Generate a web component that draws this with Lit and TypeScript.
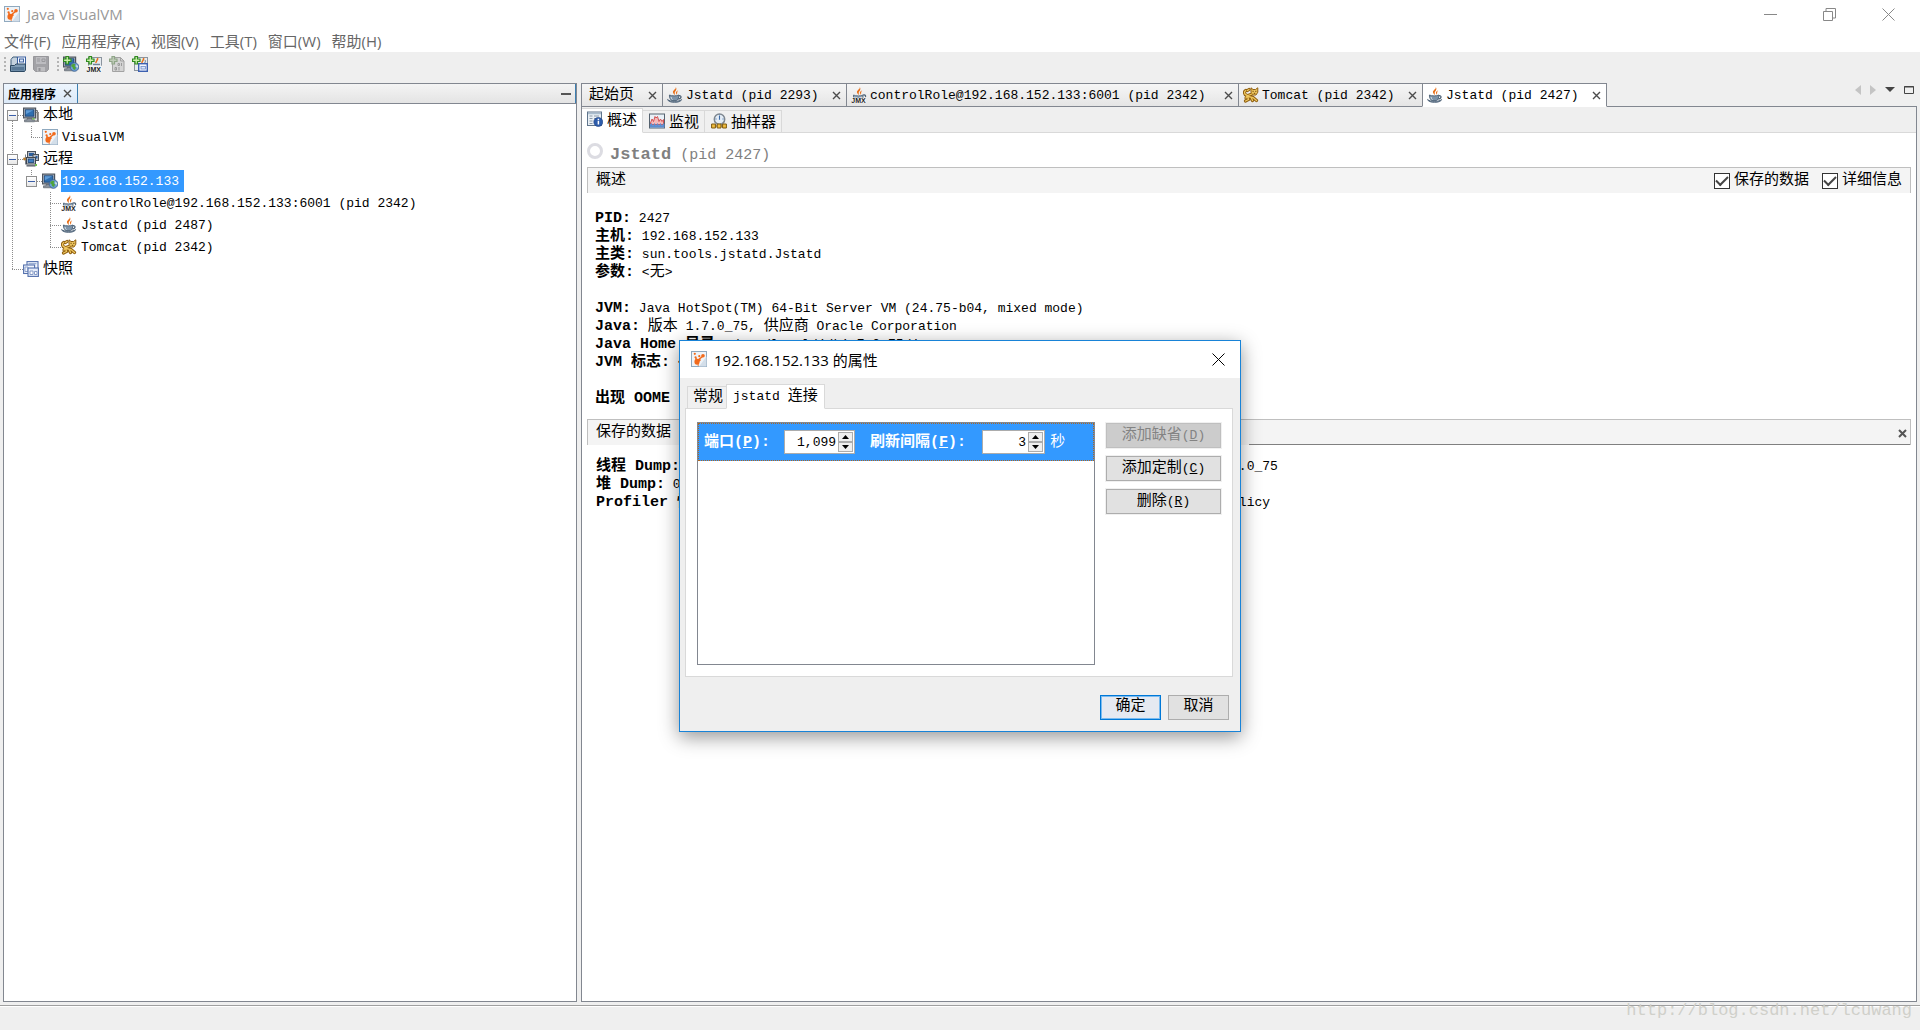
import { LitElement, html, css, svg, nothing } from "lit";
import { customElement, property, state } from "lit/decorators.js";
import { classMap } from "lit/directives/class-map.js";
import { styleMap } from "lit/directives/style-map.js";

/* ---------- icon artwork, all on a 16x16 grid ---------- */

const plus = (c = "#2f8a1f", f = "#c9f0a8") => svg`
  <path d="M3 .5h2.500v2.500h2.500v2.500h-2.500v2.500h-2.500v-2.500h-2.500v-2.500h2.500z" fill=${f} stroke=${c} stroke-width="1.200"/>`;

const globe = svg`
  <circle cx="11.500" cy="11" r="4.300" fill="#6d9fd6" stroke="#3c5f8c" stroke-width=".8"/>
  <path d="M8.500 9c1.500-1.700 3.500-1.500 4-.5l-1 1.500 1.500 1.500-1 2.500-2-1-.5-2-1.500-.8z" fill="#4fa43a"/>
  <path d="M13.500 8.500l1.500 2-.8 1.500-1-1.500z" fill="#e2f3da"/>`;

const monitor = svg`
  <rect x=".6" y="1.100" width="12" height="9.800" fill="#b9c0ca" stroke="#4d545e" stroke-width="1.200"/>
  <rect x="2.300" y="2.800" width="8.600" height="6.400" fill="#2f6fb0" stroke="#173f70" stroke-width=".8"/>
  <path d="M2.800 3.200h7.500l-7.500 4z" fill="#5f9bd6"/>
  <path d="M4 11.500h5v1.300h2.500v2h-10v-2h2.500z" fill="#8b929c" stroke="#4d545e" stroke-width=".6"/>`;

const flame = svg`
  <path d="M8.700 0c.9 2-3.200 3.200-2.700 5.400.2 1 1.200 1.600 1.800 2.600.3-1.400-.5-2 .1-3 .8-1.200 2.400-2.800.8-5z" fill="#e8701a"/>
  <path d="M11.200 3.200c-1.700.8-2.900 2-2 3.400l.4 1.200c1.200-1.600-.2-2.500 1.600-4.600z" fill="#e8701a"/>`;

const cup = svg`
  <path d="M.6 12.500c2 2.400 12 2.400 14 0-.6 3.800-13.400 3.800-14 0z" fill="#aebccb" stroke="#4a5f74" stroke-width=".9"/>
  <path d="M11.500 8.800c3.600-.8 3.400 3.200-.8 3.200" fill="none" stroke="#4a5f74" stroke-width="1.200"/>
  <path d="M2.400 8c2.500 1.200 7 1.200 9.500 0 0 2.700-1 4.900-2.600 5.600h-4.300c-1.600-.7-2.600-2.900-2.600-5.600z" fill="#7e94a9" stroke="#4a5f74" stroke-width=".9"/>
  <path d="M4 10c.2 1.400.7 2.200 1.400 2.700" stroke="#dfe7ee" fill="none"/>${flame}`;

const catLines = "M2.800 3.500c-2 1-1.500 4 .5 4.500s-.3 2-.3 3M5 8.500l4-1.500M5 9.500l5 1 3.500 3M4.500 9.500l1 3-3 1.500M8 10l1.500 3.500M4.500 3.500l1.500-1";

const art: Record<string, unknown> = {
  vm: svg`
    <rect x=".5" y=".5" width="15" height="15" fill="#eff3f7" stroke="#8fa9bf"/>
    <path d="M8 15.500h7.500v-10z" fill="#d3dee9"/>
    <ellipse cx="6" cy="10.800" rx="2.600" ry="3" fill="#f26a1b"/>
    <path d="M6.500 9.500l5-4M5.500 9l-1-3" stroke="#f26a1b" stroke-width="1.500" fill="none"/>
    <path d="M7 8l2.200-.2.600 1.800-2 1.400z" fill="#f26a1b"/>
    <circle cx="12" cy="4.800" r="1.800" fill="#f26a1b"/>
    <circle cx="8.300" cy="5.200" r="1.100" fill="#f26a1b"/>
    <circle cx="3.800" cy="2.800" r="1.100" fill="#f26a1b"/>
    <circle cx="4.500" cy="6.300" r="1" fill="#f26a1b"/>
    <circle cx="7.200" cy="14" r=".8" fill="#f26a1b"/>`,
  open: svg`
    <path d="M1 3.500l2-2.500h4l1 2v9.500h-7z" fill="#c3d1de" stroke="#3f5f7d"/>
    <rect x="7.500" y="1" width="8" height="8" fill="#f5f9ff" stroke="#3c60a0"/>
    <rect x="9.500" y="3" width="4" height="3" fill="#dbe6f7" stroke="#3c60a0"/>
    <path d="M.5 15.500v-6h4l1.500-1.500h9.500v6l-1 1.500z" fill="#7e9bb5" stroke="#2c4862"/>
    <path d="M1.500 11h12.500v3.500h-12.500z" fill="#587896"/>`,
  save: svg`
    <path d="M.5.5h15v13l-2 2h-11l-2-2z" fill="#a2a2a6" stroke="#97979b"/>
    <rect x="3" y="1" width="10" height="7" fill="#bcbcc0"/>
    <path d="M4 3h3M4 5h3M9 3h3v2.500h-3z" stroke="#98989c" fill="none"/>
    <rect x="4" y="11" width="8" height="4.500" fill="#bdbdc0"/><rect x="5.500" y="12" width="2" height="3" fill="#929296"/>`,
  addHost: svg`${monitor}${globe}${plus()}`,
  addJmx: svg`
    <rect x="2.500" y="1.500" width="13" height="14" fill="#e6ebf0" stroke="#8b949e"/>
    <path d="M11.500 2c1 2-2 3-1.500 5" fill="none" stroke="#e8701a" stroke-width="1.600"/>
    <path d="M7 8.500h7" stroke="#6c8196" stroke-width="1.500"/>
    <rect x=".5" y="9.700" width="15.500" height="6.300" fill="#f4f4f4"/>
    <text x=".6" y="15.500" class="tag">JMX</text>${plus()}`,
  addDump: svg`
    <path d="M3.500 1.500h8l3.500 3.500v10.500h-11.500z" fill="#d4d4d4" stroke="#a2a2a2"/>
    <path d="M11.500 1.500v3.500h3.500" fill="none" stroke="#a2a2a2"/>
    <path d="M9 7.500h1.500v2h-1.500zM12.500 7v3M6 11.500h1.500v2.500h-1.500zM10 11v3.500" fill="none" stroke="#9b9b9b"/>
    ${plus("#8fa588", "#c0ccb9")}`,
  addSnap: svg`
    <rect x="2.500" y="1.500" width="13" height="13" fill="#e6ebf0" stroke="#8b949e"/>
    <path d="M11.500 2c1 2-2 3-1.500 5" fill="none" stroke="#e8701a" stroke-width="1.600"/>
    <path d="M13 4c1 1.500 0 3-1 3.500" fill="none" stroke="#6c8196"/>
    <rect x="6.700" y="7.700" width="8.600" height="7.600" fill="#f3f7ff" stroke="#3c60b0" stroke-width="1.400"/>
    <rect x="9" y="10.500" width="4.500" height="2.500" fill="#dce7fb" stroke="#6f8cc7" stroke-width=".8"/>${plus()}`,
  local: svg`
    <path d="M12 3.500h2.500v10.500h-2.500" fill="#e3e3e3" stroke="#6a6a6a" stroke-width=".9"/>
    <path d="M12 5.500h4M12 14.500h4M15.500 5v10" stroke="#8b8b8b" stroke-width=".9" fill="none"/>${monitor}
    <rect x="9.500" y="11" width="2" height="1.500" fill="#6cc04a"/>`,
  remote: svg`
    <rect x="4.500" y=".5" width="8" height="6" fill="#b8bec8" stroke="#4b525c"/>
    <rect x="6" y="2" width="5" height="3" fill="#2b5f9e"/>
    <rect x="10" y="3.500" width="5.500" height="6" fill="#b8bec8" stroke="#4b525c"/>
    <rect x="12.500" y="5" width="2" height="2.500" fill="#2b5f9e"/>
    <rect x="3.500" y="6.500" width="9" height="6.500" fill="#c5cbd3" stroke="#3f464f"/>
    <rect x="5.200" y="8" width="5.600" height="3.500" fill="#3c7ec2" stroke="#173f70" stroke-width=".8"/>
    <path d="M3.500 14.700h9" stroke="#6a717b" stroke-width="1.800"/>
    <path d="M12 13h2v2h-2z" fill="#6cc04a"/>
    <path d="M2.500 3.500v10M1 8h2" stroke="#7c838c"/>
    <circle cx="1.500" cy="8" r="1.400" fill="#b87b2c"/>`,
  host: svg`${monitor}${globe}`,
  jmx: svg`
    <path d="M2.500 8c2.500 1.200 7 1.200 9.500 0v3h-9.500z" fill="#8ea2b5" stroke="#4a5f74" stroke-width=".8"/>
    <path d="M12 8c3-.6 3.200 1.600 2 2.400" fill="none" stroke="#4a5f74" stroke-width="1.100"/>${flame}
    <text x=".3" y="15.700" class="tag halo">JMX</text>`,
  cup,
  tomcat: svg`
    <path d=${catLines} fill="none" stroke="#8f5f10" stroke-width="3.200" stroke-linecap="round"/>
    <path d="M8 .8l2 1.700h2.500l2.300-1.700v4.400l-1.800 2.800h-3.200l-1.800-2.800z" fill="#f0c860" stroke="#8f5f10"/>
    <path d=${catLines} fill="none" stroke="#f0c860" stroke-width="1.300" stroke-linecap="round"/>
    <path d="M9.500 4.300h1.200M12.200 4.300h1.200M10.700 6.300h1.600" stroke="#6a430a"/>`,
  snapshots: svg`
    <rect x="4" y=".6" width="11" height="9" fill="#f2f6fd" stroke="#5470ad" stroke-width="1.100"/>
    <path d="M5.500 2.700h8" stroke="#8ba0cb"/>
    <rect x=".6" y="4" width="11" height="8.500" fill="#f2f6fd" stroke="#5470ad" stroke-width="1.100"/>
    <path d="M2 6h3v4.500h-3z" fill="none" stroke="#8ba0cb"/>
    <rect x="5" y="7" width="10.400" height="8.400" fill="#e6edfa" stroke="#5470ad" stroke-width="1.100"/>
    <path d="M7 10h3v3.500h-3zM11.500 10.500h2.500v3h-2.500z" fill="#fff" stroke="#7d93c2" stroke-width=".9"/>`,
  overview: svg`
    <rect x=".5" y="1" width="14" height="13.500" fill="#e9eff5" stroke="#60758c"/>
    <path d="M1 2.500h13" stroke="#a9bccd" stroke-width="1.500"/>
    <path d="M2.500 5h3M7 5h5M2.500 7.500h3M7 7.500h3M2.500 10h3M2.500 12.500h3" stroke="#8c9aa8"/>
    <circle cx="11.300" cy="11" r="4.500" fill="#2d5cab" stroke="#1c3f80" stroke-width=".6"/>
    <path d="M11.400 10v3.500M11.400 7.800v1.400" stroke="#fff" stroke-width="1.500"/>`,
  monitorTab: svg`
    <rect x=".5" y="1" width="15" height="14" fill="#e9f0f7" stroke="#55626f"/>
    <path d="M1.500 10l1.500-4 1.500 2.500 1.500-5 1 1.500 1.500-1.500 1.500 5 1.500-2.500 1.500 2.500 1.500-2v5h-13z" fill="#f4b9b9" stroke="#d04545" stroke-width=".9"/>
    <path d="M1 14.500v-3l1.500-1.500 1.500 2.500 1.500-2.500 1.500 2.500 1.500-2.500 1.500 2.500 1.500-2.500 1.500 2.500 1.500-2.500 1 1.500v3z" fill="#5b8ed1"/>`,
  sampler: svg`
    <circle cx="8.500" cy="6.200" r="5.200" fill="#e4edf6" stroke="#7e8790" stroke-width="1.500"/>
    <path d="M8.500 3v3.700M8.500 1.800v.8M4.500 6h1M11.500 6h1" stroke="#3d6ca8" stroke-width="1.100"/>
    <path d="M3 13h11" stroke="#70500f"/>
    <path d="M.6 11h3.800v4h-3.800zM6.200 11h3.800v4h-3.800zM11.600 11h3.800v4h-3.800z" fill="#f0bd3f" stroke="#7f5a10"/>`,
};

@customElement("vm-icon")
class VmIcon extends LitElement {
  @property() name = "";
  static styles = css`
    :host { display: block; flex: none; width: 16px; height: 16px; }
    .art { display: block; width: 16px; height: 16px; }
    .tag { font: bold 7px "Liberation Sans", sans-serif; fill: #222; }
    .halo { stroke: #fff; stroke-width: 1px; paint-order: stroke; }
  `;
  render() {
    return html`<svg class="art" viewBox="0 0 16 16" aria-hidden="true">${art[this.name]}</svg>`;
  }
}

/* Chinese runs are set one step larger than the monospaced Latin around them. */
const mixed = (text: string) =>
  text
    .split(/([\u3000-\u9fff\uff00-\uffef]+)/)
    .filter(Boolean)
    .map((run) => (/[\u3000-\u9fff\uff00-\uffef]/.test(run) ? html`<span class="han">${run}</span>` : run));

const base = css`
  * { box-sizing: border-box; }
  button, input { font: inherit; color: inherit; margin: 0; padding: 0; border: 0; background: none; border-radius: 0; }
  .han { font-family: "Noto Sans CJK SC", sans-serif; font-size: 15px; line-height: 0; }
  .cross { display: block; width: 9px; height: 9px; }
`;

const cross = (w = 1.4, c = "#4c4c4c") =>
  html`<svg class="cross" viewBox="0 0 9 9" aria-hidden="true"><path d="M1 1l7 7M8 1l-7 7" stroke=${c} stroke-width=${w} fill="none"/></svg>`;

type Guide = "gap" | "pipe" | "tee" | "ell" | "top";
interface Node { guides: Guide[]; expander?: boolean; icon: string; label: string; }

const nodes: Node[] = [
  { guides: ["top"], expander: true, icon: "local", label: "本地" },
  { guides: ["pipe", "ell"], icon: "vm", label: "VisualVM" },
  { guides: ["tee"], expander: true, icon: "remote", label: "远程" },
  { guides: ["pipe", "ell"], expander: true, icon: "host", label: "192.168.152.133" },
  { guides: ["pipe", "gap", "tee"], icon: "jmx", label: "controlRole@192.168.152.133:6001 (pid 2342)" },
  { guides: ["pipe", "gap", "tee"], icon: "cup", label: "Jstatd (pid 2487)" },
  { guides: ["pipe", "gap", "ell"], icon: "tomcat", label: "Tomcat (pid 2342)" },
  { guides: ["ell"], icon: "snapshots", label: "快照" },
];

@customElement("vm-explorer")
class VmExplorer extends LitElement {
  @state() private selected = 3;

  static styles = [base, css`
    :host { display: flex; flex-direction: column; border: 1px solid #828790; background: #fff; min-width: 0; }
    .head { display: flex; align-items: stretch; height: 20px; border-bottom: 1px solid #828790; background: linear-gradient(#f4f4f4, #e4e4e4); }
    .tab { display: flex; align-items: center; gap: 7px; padding: 0 5px 0 4px; border-right: 1px solid #3c7fb1; background: linear-gradient(#edf5fd, #dbe9f8); font: bold 12px "Noto Sans CJK SC", sans-serif; }
    .close { display: flex; }
    .min { margin-left: auto; width: 20px; display: flex; align-items: center; justify-content: center; border-right: 1px solid #3c7fb1; }
    .min::before { content: ""; width: 10px; height: 2px; background: #555; }
    .tree { list-style: none; margin: 0; padding: 0; font: 13px "Liberation Mono", "Noto Sans CJK SC", monospace; }
    .row { display: flex; height: 22px; align-items: center; }
    .guide { flex: none; width: 19px; height: 22px; background-repeat: no-repeat;
      --v: repeating-linear-gradient(#8c8c8c 0 1px, transparent 1px 2px);
      --h: repeating-linear-gradient(90deg, #8c8c8c 0 1px, transparent 1px 2px); }
    .pipe { background-image: var(--v); background-size: 1px 22px; background-position: 8px 0; }
    .tee { background-image: var(--v), var(--h); background-size: 1px 22px, 11px 1px; background-position: 8px 0, 8px 11px; }
    .ell { background-image: var(--v), var(--h); background-size: 1px 11px, 11px 1px; background-position: 8px 0, 8px 11px; }
    .top { background-image: var(--v), var(--h); background-size: 1px 11px, 11px 1px; background-position: 8px 11px, 8px 11px; }
    .box { display: flex; align-items: center; justify-content: center; width: 11px; height: 11px; margin: 6px 0 0 3px; border: 1px solid #8f8f8f; background: linear-gradient(#fff, #e8e8e8); }
    .box::before { content: ""; width: 7px; height: 1px; background: #3c5fa8; }
    .label { height: 22px; line-height: 24px; margin-left: 3px; padding: 0 5px 0 1px; white-space: pre; }
    .on { background: #3399ff; color: #fff; }
  `];

  render() {
    return html`
      <div class="head">
        <div class="tab"><span>应用程序</span><button class="close" aria-label="关闭">${cross()}</button></div>
        <button class="min" aria-label="最小化"></button>
      </div>
      <ul class="tree" role="tree">
        ${nodes.map((n, i) => html`
          <li class="row" role="treeitem" aria-selected=${i === this.selected}>
            ${n.guides.map((g, k) => html`<span class="guide ${g}">${n.expander && k === n.guides.length - 1
              ? html`<button class="box" aria-label="折叠"></button>` : nothing}</span>`)}
            <vm-icon name=${n.icon}></vm-icon>
            <span class=${classMap({ label: true, on: i === this.selected })} @click=${() => (this.selected = i)}>${mixed(n.label)}</span>
          </li>`)}
      </ul>`;
  }
}

const documents = [
  { icon: "", label: "起始页" },
  { icon: "cup", label: "Jstatd (pid 2293)" },
  { icon: "jmx", label: "controlRole@192.168.152.133:6001 (pid 2342)" },
  { icon: "tomcat", label: "Tomcat (pid 2342)" },
  { icon: "cup", label: "Jstatd (pid 2427)" },
];

const views = [
  { icon: "overview", label: "概述" },
  { icon: "monitorTab", label: "监视" },
  { icon: "sampler", label: "抽样器" },
];

const facts: [string, string][] = [
  ["PID:", "2427"],
  ["主机:", "192.168.152.133"],
  ["主类:", "sun.tools.jstatd.Jstatd"],
  ["参数:", "<无>"],
  ["", ""],
  ["JVM:", "Java HotSpot(TM) 64-Bit Server VM (24.75-b04, mixed mode)"],
  ["Java:", "版本 1.7.0_75, 供应商 Oracle Corporation"],
  ["Java Home 目录:", "/usr/local/jdk1.7.0_75/jre"],
  ["JVM 标志:", "<无>"],
  ["", ""],
  ["出现 OOME 时生成堆 dump:", "禁用"],
];

const saved: [string, string][] = [["线程 Dump:", "0"], ["堆 Dump:", "0"], ["Profiler 快照:", "0"]];
const args = ["-Dapplication.home=/usr/local/jdk1.7.0_75", "-Xms8m", "-Djava.security.policy=jstatd.all.policy"];

/* Tabs reserve one 8px cell for each character of the title. */
const cells = (label: string) => styleMap({ minWidth: `${label.length * 8}px` });

@customElement("vm-workspace")
class VmWorkspace extends LitElement {
  static styles = [base, css`
    :host { display: flex; flex-direction: column; min-width: 0; font: 13px "Liberation Mono", "Noto Sans CJK SC", monospace; color: #000; }
    .docs { display: flex; height: 24px; }
    .doc { display: flex; align-items: center; border: 1px solid #828790; border-right: 0; background: linear-gradient(#f6f6f6, #e5e5e5); padding: 0 5px 0 4px; white-space: nowrap; }
    .doc.wide { padding-left: 7px; }
    .doc.current { background: #fff; border-right: 1px solid #828790; border-bottom-color: #fff; }
    .name { margin: 0 10px 0 3px; line-height: 20px; padding-top: 1px; }
    .wide .name { margin: 0 14px 0 0; }
    .close { display: flex; }
    .rest { flex: 1; display: flex; align-items: flex-start; justify-content: flex-end; gap: 9px; padding: 2px 3px 0 0; border-bottom: 1px solid #828790; }
    .nav { display: flex; width: 6px; height: 10px; }
    .nav.big { width: 10px; }
    .nav svg { width: 100%; height: 10px; display: block; }
    .body { flex: 1; border: 1px solid #828790; border-top: 0; background: #fff; }
    .views { display: flex; align-items: flex-end; height: 26px; background: #efefef; }
    .view { display: flex; align-items: center; gap: 4px; height: 23px; padding: 0 5px 1px 6px; border: solid #d9d9d9; border-width: 1px 1px 1px 0; background: #f0f0f0; }
    .view.current { height: 25px; padding: 0 5px 4px; background: #fff; border-bottom-color: #fff; }
    .fill { flex: 1; align-self: stretch; border-bottom: 1px solid #d9d9d9; }
    .title { display: flex; align-items: center; gap: 7px; height: 34px; padding: 8px 5px 0; color: #808080; font-size: 15px; font-weight: normal; margin: 0; white-space: nowrap; }
    .ring { width: 16px; height: 16px; border: 3px solid #dcdce2; border-radius: 50%; margin-bottom: 6px; }
    .strong { font-size: 17px; }
    .section { position: relative; display: flex; align-items: center; height: 26px; margin: 0 5px; padding: 1px 8px 0; gap: 13px; border: 1px solid #bfbfbf; border-bottom: 0; background: #f4f4f4; line-height: 18px; }
    .section .grow { flex: 1; font: inherit; margin: 0; }
    .section.ruled { padding-right: 3px; }
    .section.ruled::after { content: ""; position: absolute; left: 50%; right: 0; bottom: 0; height: 1px; background: #808080; }
    .check { display: flex; align-items: center; gap: 4px; }
    .check input { appearance: none; width: 16px; height: 16px; border: 1px solid #333; background: #fff; display: grid; place-items: center; }
    .check input:checked::before { content: ""; width: 10px; height: 5px; margin-top: -3px; border: solid #444; border-width: 0 0 2px 2px; transform: rotate(-45deg); }
    .facts { padding: 17px 13px 11px; line-height: 18px; }
    .line { height: 18px; white-space: nowrap; }
    .line b { font-size: 15px; line-height: 0; }
    .data { display: grid; grid-template-columns: 362px minmax(0, 1fr); padding: 13px 14px; line-height: 18px; }
  `];

  render() {
    const last = documents.length - 1;
    return html`
      <div class="docs">
        ${documents.map((d, i) => html`
          <div class=${classMap({ doc: true, current: i === last, wide: !d.icon })}>
            ${d.icon ? html`<vm-icon name=${d.icon}></vm-icon>` : nothing}
            <span class="name" style=${cells(d.label)}>${mixed(d.label)}</span>
            <button class="close" aria-label="关闭">${cross()}</button>
          </div>`)}
        <div class="rest">
          <button class="nav" aria-label="向左滚动"><svg viewBox="0 0 6 10"><path d="M6 0v10l-6-5z" fill="#c4c4c4"/></svg></button>
          <button class="nav" aria-label="向右滚动"><svg viewBox="0 0 6 10"><path d="M0 0v10l6-5z" fill="#c4c4c4"/></svg></button>
          <button class="nav big" aria-label="文档列表"><svg viewBox="0 0 10 10"><path d="M0 2h10l-5 5z" fill="#444"/></svg></button>
          <button class="nav big" aria-label="最大化"><svg viewBox="0 0 10 10"><path d="M.5 1.500h9v7h-9zM0 2h10" fill="none" stroke="#444"/></svg></button>
        </div>
      </div>
      <div class="body">
        <div class="views">
          ${views.map((v, i) => html`<button class=${classMap({ view: true, current: i === 0 })}>
            <vm-icon name=${v.icon}></vm-icon>${mixed(v.label)}</button>`)}
          <span class="fill"></span>
        </div>
        <h1 class="title"><span class="ring"></span><span><b class="strong">Jstatd</b> (pid 2427)</span></h1>
        <div class="section">
          <h2 class="grow">${mixed("概述")}</h2>
          <label class="check"><input type="checkbox" checked><span>${mixed("保存的数据")}</span></label>
          <label class="check"><input type="checkbox" checked><span>${mixed("详细信息")}</span></label>
        </div>
        <div class="facts">
          ${facts.map(([k, v]) => html`<div class="line">${k ? html`<b>${mixed(k)}</b> ${mixed(v)}` : nothing}</div>`)}
        </div>
        <div class="section ruled">
          <h2 class="grow">${mixed("保存的数据")}</h2>
          <button class="close" aria-label="关闭">${cross(2, "#555")}</button>
        </div>
        <div class="data">
          <div>${saved.map(([k, v]) => html`<div class="line"><b>${mixed(k)}</b> ${v}</div>`)}</div>
          <div>${args.map((a) => html`<div class="line">${a}</div>`)}</div>
        </div>
      </div>`;
  }
}

@customElement("vm-properties")
class VmProperties extends LitElement {
  @state() private port = 1099;
  @state() private interval = 3;

  static styles = [base, css`
    :host { display: block; border: 1px solid #1883d7; background: #efefef; box-shadow: 0 5px 18px rgba(0, 0, 0, .42); font: 13px "Liberation Mono", "Noto Sans CJK SC", monospace; color: #000; }
    .bar { display: flex; align-items: center; gap: 7px; height: 37px; padding: 0 15px 1px 11px; background: #fff; font: 15px "Open Sans", "Noto Sans CJK SC", sans-serif; }
    .caption { flex: 1; font: inherit; margin: 0; }
    .quit { display: flex; }
    .quit svg { width: 13px; height: 13px; display: block; }
    .tabs { display: flex; align-items: flex-end; height: 31px; padding-left: 7px; margin-bottom: -1px; position: relative; }
    .tab { height: 23px; padding: 0 3px 0 5px; border: 1px solid #d9d9d9; border-right: 0; background: #f0f0f0; line-height: 20px; }
    .tab.current { height: 25px; padding: 0 6px; border-right: 1px solid #d9d9d9; border-bottom-color: #fff; background: #fff; }
    .pane { display: flex; gap: 11px; margin: 0 7px 0 5px; padding: 13px 11px 11px; border: 1px solid #d9d9d9; background: #fff; }
    .list { flex: 1; height: 243px; border: 1px solid #828790; background: #fff; }
    .entry { display: flex; align-items: center; height: 38px; padding-left: 5px; border: 1px dotted #b0661e; background: #3399ff; color: #fff; }
    .field { font-weight: bold; font-size: 15px; white-space: nowrap; }
    .spin { display: flex; width: 71px; height: 24px; margin: 0 15px 0 14px; border: 1px solid #acacac; background: #fff; color: #000; }
    .spin.short { width: 63px; margin: 0 5px 0 16px; }
    .spin input { flex: 1; min-width: 0; text-align: right; padding-right: 2px; }
    .steps { display: flex; flex-direction: column; width: 16px; padding: 1px 1px 1px 0; }
    .step { flex: 1; display: flex; align-items: center; justify-content: center; border: 1px solid #acacac; background: #efefef; }
    .step svg { width: 7px; height: 4px; display: block; }
    .side { display: flex; flex-direction: column; gap: 8px; width: 115px; padding-top: 1px; }
    .btn { height: 25px; border: 1px solid #adadad; background: #e1e1e1; padding-bottom: 3px; white-space: nowrap; }
    .side .btn { padding-bottom: 1px; box-shadow: 0 0 0 1px #f0f0f0; }
    .btn:disabled { background: #ccc; border-color: #bfbfbf; color: #838383; }
    .btn.primary { border-color: #0078d7; box-shadow: inset 0 0 0 1px #7abbf0; background: #e5e9f1; }
    .foot { display: flex; justify-content: flex-end; gap: 7px; padding: 18px 11px 11px; }
    .foot .btn { width: 61px; }
  `];

  private stepper(id: string, value: string, cls: string, change: (d: number) => void) {
    return html`<span class="spin ${cls}">
      <input id=${id} type="text" inputmode="numeric" .value=${value}>
      <span class="steps">
        <button class="step" aria-label="增加" @click=${() => change(1)}><svg viewBox="0 0 7 4"><path d="M0 4h7l-3.500-4z"/></svg></button>
        <button class="step" aria-label="减少" @click=${() => change(-1)}><svg viewBox="0 0 7 4"><path d="M0 0h7l-3.500 4z"/></svg></button>
      </span>
    </span>`;
  }

  render() {
    return html`
      <div class="bar">
        <vm-icon name="vm"></vm-icon>
        <h2 class="caption">192.168.152.133 的属性</h2>
        <button class="quit" aria-label="关闭"><svg viewBox="0 0 13 13"><path d="M.5.5l12 12M12.500.5l-12 12" stroke="#000" fill="none"/></svg></button>
      </div>
      <div class="tabs">
        <button class="tab">${mixed("常规")}</button>
        <button class="tab current">${mixed("jstatd 连接")}</button>
      </div>
      <div class="pane">
        <div class="list">
          <div class="entry">
            <label class="field" for="port">${mixed("端口")}(<u>P</u>):</label>
            ${this.stepper("port", this.port.toLocaleString("en-US"), "", (d) => (this.port += d))}
            <label class="field" for="interval">${mixed("刷新间隔")}(<u>F</u>):</label>
            ${this.stepper("interval", String(this.interval), "short", (d) => (this.interval += d))}
            <span>${mixed("秒")}</span>
          </div>
        </div>
        <div class="side">
          <button class="btn" disabled>${mixed("添加缺省")}(<u>D</u>)</button>
          <button class="btn">${mixed("添加定制")}(<u>C</u>)</button>
          <button class="btn">${mixed("删除")}(<u>R</u>)</button>
        </div>
      </div>
      <div class="foot">
        <button class="btn primary">${mixed("确定")}</button>
        <button class="btn">${mixed("取消")}</button>
      </div>`;
  }
}

const menus = ["文件(F)", "应用程序(A)", "视图(V)", "工具(T)", "窗口(W)", "帮助(H)"];
const tools = [
  [["open", "装入"], ["save", "另存为"]],
  [["addHost", "添加远程主机"], ["addJmx", "添加 JMX 连接"], ["addDump", "添加核心 dump"], ["addSnap", "添加快照"]],
];

@customElement("app-root")
class AppRoot extends LitElement {
  static styles = [base, css`
    :host { position: relative; display: flex; flex-direction: column; min-height: 100vh; background: #efefef; overflow: hidden; }
    .bar { display: flex; align-items: center; gap: 7px; height: 29px; padding: 0 25px 1px 4px; background: #fff; color: #999; font: 15px "Open Sans", "Noto Sans CJK SC", sans-serif; }
    .app { flex: 1; font: inherit; margin: 0; }
    .win { display: flex; margin-left: 39px; }
    .win svg { width: 13px; height: 13px; display: block; }
    .menu { display: flex; gap: 11px; height: 23px; padding: 0 4px; background: #fff; color: #666; font: 15px/25px "Open Sans", "Noto Sans CJK SC", sans-serif; }
    .tools { display: flex; height: 31px; padding: 4px 4px 0; gap: 8px; }
    .group { display: flex; gap: 7px; }
    .group::before { content: ""; width: 2px; height: 15px; margin: 1px -3px 0 0; background: repeating-linear-gradient(#b4b4b4 0 2px, transparent 2px 4px); }
    .tool { display: flex; height: 16px; }
    .main { flex: 1; display: grid; grid-template-columns: 574px minmax(0, 1fr); gap: 4px; padding: 0 3px; }
    .status { height: 28px; padding-top: 3px; }
    .status::before { content: ""; display: block; height: 2px; background: linear-gradient(#a0a0a0 0 1px, #fff 1px 2px); }
    .mark { position: absolute; right: 8px; bottom: 7px; color: #d0d0ca; font: 17px/24px "Liberation Mono", monospace; text-decoration: none; }
    .props { position: absolute; left: calc(50% - 281px); top: 340px; width: 562px; }
  `];

  render() {
    return html`
      <header class="bar">
        <vm-icon name="vm"></vm-icon><h1 class="app">Java VisualVM</h1>
        <button class="win" aria-label="最小化"><svg viewBox="0 0 13 13"><path d="M0 6.500h13" stroke="#888"/></svg></button>
        <button class="win" aria-label="还原"><svg viewBox="0 0 13 13"><path d="M.5 3.500h9v9h-9zM3 3v-2.500h9.500v9.500h-2.500" stroke="#888" fill="none"/></svg></button>
        <button class="win" aria-label="关闭"><svg viewBox="0 0 13 13"><path d="M.5.5l12 12M12.500.5l-12 12" stroke="#888" fill="none"/></svg></button>
      </header>
      <nav class="menu">${menus.map((m) => html`<button>${m}</button>`)}</nav>
      <div class="tools">
        ${tools.map((g) => html`<div class="group">${g.map(([icon, name]) => html`
          <button class="tool" aria-label=${name}><vm-icon name=${icon}></vm-icon></button>`)}</div>`)}
      </div>
      <main class="main">
        <vm-explorer></vm-explorer>
        <vm-workspace></vm-workspace>
      </main>
      <footer class="status"></footer>
      <a class="mark" href="http://blog.csdn.net/lcuwang">http://blog.csdn.net/lcuwang</a>
      <vm-properties class="props" role="dialog" aria-label="192.168.152.133 的属性"></vm-properties>`;
  }
}
